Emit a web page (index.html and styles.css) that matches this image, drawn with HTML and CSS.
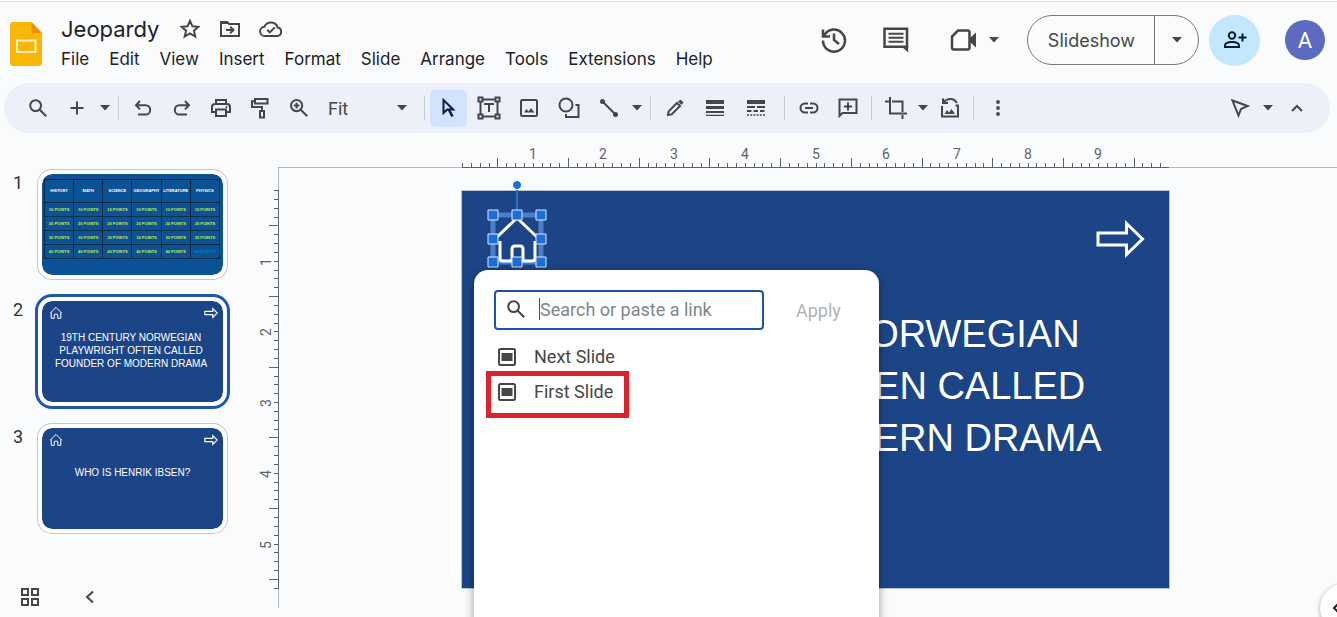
FILE: index.html
```html
<!DOCTYPE html>
<html lang="en">
<head>
<meta charset="utf-8">
<title>Jeopardy</title>
<link rel="stylesheet" href="styles.css">
</head>
<body>
<svg class="sprite" aria-hidden="true">
  <symbol id="caret" viewBox="0 0 10 6"><path d="M0 0h10L5 5.5z" fill="currentColor"/></symbol>
  <symbol id="search" viewBox="0 0 20 20"><circle cx="7.6" cy="7.6" r="5.4"/><path d="M11.8 11.8l6.4 6.4"/></symbol>
  <symbol id="slide-icon" viewBox="0 0 18 18"><rect x="1" y="1" width="16" height="16" rx="1.5"/><path d="M3.5 5h11v8h-11z" fill="currentColor" stroke="none"/></symbol>
  <symbol id="home" viewBox="0 0 14 14"><path d="M1.2 7.2L7 1.4l5.8 5.8M2.2 6.4v5.9h3V9q0-.8.8-.8h2q.8 0 .8.8v3.3h3V6.4"/></symbol>
  <symbol id="arrow" viewBox="0 0 50 40"><path d="M3 14h28.500V4.500L47.500 20 31.500 35.500V26H3z"/></symbol>
</svg>

<header class="header">
  <svg class="logo" viewBox="0 0 32 44" aria-hidden="true">
    <path d="M3 0h18.500L32 11v30a3 3 0 0 1-3 3H3a3 3 0 0 1-3-3V3a3 3 0 0 1 3-3z" fill="#fbb705"/>
    <path d="M21.500 0L32 11H23a1.500 1.500 0 0 1-1.500-1.500z" fill="#ee8f00"/>
    <path d="M7 18.500h18.500v11.500H7z" fill="none" stroke="#fff3c4" stroke-width="2"/>
  </svg>
  <div class="doc">
    <div class="doc-row">
      <h1 class="title">Jeopardy</h1>
      <button class="icon-btn" aria-label="Star"><svg width="20" height="20" viewBox="0 0 20 20"><path d="M10 1.800l2.400 5.500 6 .5-4.500 3.900 1.400 5.800L10 14.400l-5.300 3.100 1.400-5.800-4.500-3.900 6-.5z"/></svg></button>
      <button class="icon-btn" aria-label="Move"><svg width="22" height="18" viewBox="0 0 22 18"><path d="M2 16V2h6l2 2h10v12z"/><path d="M1 1h7.500l2 3H1z" fill="currentColor" stroke="none"/><path d="M7 10h7M11.200 6.700l3.300 3.300-3.300 3.300"/></svg></button>
      <button class="icon-btn" aria-label="Saved to Drive"><svg width="24" height="18" viewBox="0 0 24 18"><path d="M6 16a4.600 4.600 0 0 1-.6-9.200A7 7 0 0 1 18.600 7.500 4.300 4.300 0 0 1 18.500 16z"/><path d="M8.200 9.800l2.600 2.600 5-5"/></svg></button>
    </div>
    <nav class="menus">
      <button>File</button><button>Edit</button><button>View</button><button>Insert</button><button>Format</button><button>Slide</button><button>Arrange</button><button>Tools</button><button>Extensions</button><button>Help</button>
    </nav>
  </div>
  <div class="actions">
    <button class="act" aria-label="Version history"><svg width="28" height="28" viewBox="0 0 28 28" class="bold"><path d="M3.800 10.500A11 11 0 1 1 3 14.500M3 3.500v7h7M14 7.500V14l5 4"/></svg></button>
    <button class="act" aria-label="Comments"><svg width="28" height="28" viewBox="0 0 28 28" class="bold"><path d="M2.500 2.800h22.500v18H2.500z"/><path d="M19 20h7.200v6.500z" fill="currentColor" stroke="none"/><path d="M6.500 7.800h15M6.500 11.800h15M6.500 15.800h15" stroke-width="2"/></svg></button>
    <button class="act meet" aria-label="Join a call"><svg width="28" height="24" viewBox="0 0 28 24" class="bold"><path d="M8 2.500h9.500q2 0 2 2v15q0 2-2 2H4q-2 0-2-2V8.500z"/><path d="M20 10l6-5.500v15L20 14z" fill="currentColor" stroke="none"/></svg></button>
    <button class="caret" aria-label="Call options"><svg><use href="#caret"/></svg></button>
    <div class="slideshow"><button class="show-main">Slideshow</button><button class="show-more" aria-label="Slideshow options"><svg><use href="#caret"/></svg></button></div>
    <button class="share" aria-label="Share"><svg width="24" height="20" viewBox="0 0 24 20"><circle cx="9" cy="5.500" r="3.200"/><path d="M2 17v-1.500q0-3.500 7-3.500t7 3.500V17zM19.500 3.500v8M15.500 7.500h8"/></svg></button>
    <button class="avatar">A</button>
  </div>
</header>

<div class="toolbar" role="toolbar">
  <button class="tool" aria-label="Search the menus"><svg width="20" height="20"><use href="#search"/></svg></button>
  <button class="tool" aria-label="New slide"><svg width="14" height="14" viewBox="0 0 14 14"><path d="M7 .5v13M.5 7h13"/></svg></button>
  <button class="caret" aria-label="Layouts"><svg><use href="#caret"/></svg></button>
  <span class="sep"></span>
  <button class="tool" aria-label="Undo"><svg width="18" height="18" viewBox="0 0 18 18"><path d="M6 2L2 6.200l4 4.200M2.500 6.200h9a4.700 4.700 0 0 1 0 9.400H4"/></svg></button>
  <button class="tool" aria-label="Redo"><svg width="18" height="18" viewBox="0 0 18 18"><path d="M12 2l4 4.200-4 4.200M15.500 6.200h-9a4.700 4.700 0 0 0 0 9.400H14"/></svg></button>
  <button class="tool" aria-label="Print"><svg width="22" height="20" viewBox="0 0 22 20"><path d="M6 6V2h10v4M5.500 14H2V9q0-3 3-3h12q3 0 3 3v5h-3.500M6 11.500h10V18H6z"/><circle cx="16.500" cy="9" r="1" fill="currentColor" stroke="none"/></svg></button>
  <button class="tool" aria-label="Paint format"><svg width="20" height="22" viewBox="0 0 20 22"><path d="M5 2h12.500v4.500H5zM5 4.200H2V10h10v3.500M10 14h4v6.500h-4z"/></svg></button>
  <button class="tool" aria-label="Zoom"><svg width="20" height="20" viewBox="0 0 20 20"><circle cx="7.600" cy="7.600" r="5.600"/><path d="M11.800 11.800l6.400 6.400M7.600 4.800v5.600M4.800 7.600h5.600"/></svg></button>
  <label class="zoom"><select aria-label="Zoom level"><option>Fit</option></select><svg><use href="#caret"/></svg></label>
  <span class="sep"></span>
  <button class="tool active" aria-label="Select"><svg width="16" height="20" viewBox="0 0 16 20"><path d="M2.500 2v13l3.700-3.500h6z"/><path d="M7.500 11l4 7.500" stroke-width="2.500"/></svg></button>
  <button class="tool wide" aria-label="Text box"><svg width="24" height="24" viewBox="0 0 24 24"><path d="M5 3.500h14M5 20.500h14M3.500 5v14M20.500 5v14M8 9V8h8v1M12 8v8"/><g class="knob"><path d="M1.500 1.500h4v4h-4zM18.500 1.500h4v4h-4zM1.500 18.500h4v4h-4zM18.500 18.500h4v4h-4z"/></g></svg></button>
  <button class="tool" aria-label="Image"><svg width="18" height="18" viewBox="0 0 18 18"><rect x="1" y="1" width="16" height="16" rx="1.500"/><path d="M4 13.500l2.500-3.500 2 2.500 2.500-3.500 3.500 4.500z" fill="currentColor" stroke="none"/></svg></button>
  <button class="tool wide" aria-label="Shape"><svg width="22" height="22" viewBox="0 0 22 22"><circle cx="8" cy="8" r="6.500"/><path d="M17.500 8H20.500v12H8v-3"/></svg></button>
  <button class="tool" aria-label="Line"><svg width="20" height="20" viewBox="0 0 20 20"><path d="M3 3l14 14"/><g fill="currentColor" stroke="none"><circle cx="3.500" cy="3.500" r="2.500"/><circle cx="16.500" cy="16.500" r="2.500"/></g></svg></button>
  <button class="caret" aria-label="Line types"><svg><use href="#caret"/></svg></button>
  <span class="sep"></span>
  <button class="tool" aria-label="Border colour"><svg width="18" height="18" viewBox="0 0 18 18"><path d="M2 16l.6-3.600L11 4l3 3-8.400 8.400z"/><path d="M12 2.500L13.800 1q.6-.5 1.200 0l2 2q.5.6 0 1.200L15.500 6z" fill="currentColor" stroke="none"/></svg></button>
  <button class="tool wide" aria-label="Border weight"><svg width="18" height="16" viewBox="0 0 18 16"><path d="M0 0h18v4H0zM0 6h18v3H0zM0 11h18v2H0zM0 14.800h18V16H0z" fill="currentColor" stroke="none"/></svg></button>
  <button class="tool wide" aria-label="Border dash"><svg width="18" height="16" viewBox="0 0 18 16"><path d="M0 0h18v4H0z" fill="currentColor" stroke="none"/><path d="M0 7h18" stroke-dasharray="8 2"/><path d="M0 11h18" stroke-dasharray="4.500 2"/><path d="M0 15h18" stroke-dasharray="2 1.200" stroke-width="1.500"/></svg></button>
  <span class="sep after-dash"></span>
  <button class="tool" aria-label="Insert link"><svg width="20" height="12" viewBox="0 0 20 12"><path d="M9 1.500H6a4.500 4.500 0 0 0 0 9h3M11 1.500h3a4.500 4.500 0 0 1 0 9h-3M6 6h8"/></svg></button>
  <button class="tool" aria-label="Add comment"><svg width="20" height="20" viewBox="0 0 20 20"><path d="M1.500 18V1.500h17V15h-14zM10 4.500v8M6 8.500h8"/></svg></button>
  <span class="sep"></span>
  <button class="tool" aria-label="Crop"><svg width="24" height="22" viewBox="0 0 24 22"><path d="M6 0v16.500h17M1 4.500h4M8 4.500h10.500V15M18.500 18v4"/></svg></button>
  <button class="caret tight" aria-label="Mask image"><svg><use href="#caret"/></svg></button>
  <button class="tool" aria-label="Reset image"><svg width="20" height="22" viewBox="0 0 20 22"><path d="M2 9v10.500h16V8.500h-2.500M3 1.500V6h5M3.500 5.500Q6 2 10.500 2q4 0 6.500 4"/><path d="M4.500 17l2.500-4 2.200 2.500 2.300-3.500 3.500 5z" fill="currentColor" stroke="none"/></svg></button>
  <span class="sep"></span>
  <button class="tool" aria-label="More"><svg width="4" height="16" viewBox="0 0 4 16"><g fill="currentColor" stroke="none"><circle cx="2" cy="2" r="1.900"/><circle cx="2" cy="8" r="1.900"/><circle cx="2" cy="14" r="1.900"/></g></svg></button>
  <button class="tool push" aria-label="Editing mode"><svg width="20" height="20" viewBox="0 0 20 20"><path d="M2.500 2.500l15 5.500-6.500 3-2.500 6.500z"/></svg></button>
  <button class="caret" aria-label="Mode options"><svg><use href="#caret"/></svg></button>
  <button class="tool" aria-label="Hide the menus"><svg width="12" height="8" viewBox="0 0 12 8"><path d="M1 7l5-5 5 5"/></svg></button>
</div>

<main class="workspace">
  <aside class="filmstrip">
    <ol class="thumbs">
      <li><span class="num">1</span>
        <div class="thumb board">
          <table>
            <tr><th>HISTORY</th><th>MATH</th><th>SCIENCE</th><th>GEOGRAPHY</th><th>LITERATURE</th><th>PHYSICS</th></tr>
            <tr><td>10 POINTS</td><td>10 POINTS</td><td>10 POINTS</td><td>10 POINTS</td><td>10 POINTS</td><td>10 POINTS</td></tr>
            <tr><td>20 POINTS</td><td>20 POINTS</td><td>20 POINTS</td><td>20 POINTS</td><td>20 POINTS</td><td>20 POINTS</td></tr>
            <tr><td>30 POINTS</td><td>30 POINTS</td><td>30 POINTS</td><td>30 POINTS</td><td>30 POINTS</td><td>30 POINTS</td></tr>
            <tr><td>40 POINTS</td><td>40 POINTS</td><td>40 POINTS</td><td>40 POINTS</td><td>40 POINTS</td><td class="visited">40 POINTS</td></tr>
          </table>
        </div>
      </li>
      <li><span class="num">2</span>
        <div class="thumb selected">
          <div class="thumb-icons"><svg width="14" height="14"><use href="#home"/></svg><svg width="14" height="12" class="mini-arrow"><use href="#arrow"/></svg></div>
          <p>19TH CENTURY NORWEGIAN<br>PLAYWRIGHT OFTEN CALLED<br>FOUNDER OF MODERN DRAMA</p>
        </div>
      </li>
      <li><span class="num">3</span>
        <div class="thumb">
          <div class="thumb-icons"><svg width="14" height="14"><use href="#home"/></svg><svg width="14" height="12" class="mini-arrow"><use href="#arrow"/></svg></div>
          <p class="single">WHO IS HENRIK IBSEN?</p>
        </div>
      </li>
    </ol>
    <div class="film-foot">
      <button class="icon-btn" aria-label="Grid view"><svg width="20" height="20" viewBox="0 0 20 20"><path d="M2 2h6v6H2zM12 2h6v6h-6zM2 12h6v6H2zM12 12h6v6h-6z"/></svg></button>
      <button class="icon-btn" aria-label="Hide filmstrip"><svg width="10" height="14" viewBox="0 0 10 14"><path d="M8 1.500L2 7l6 5.500"/></svg></button>
    </div>
  </aside>

  <section class="editor">
    <svg class="ruler-x" id="ruler-x" aria-hidden="true"></svg>
    <svg class="ruler-y" id="ruler-y" aria-hidden="true"></svg>
    <div class="stage">
      <div class="slide">
        <svg class="next" width="50" height="40"><use href="#arrow"/></svg>
        <p class="slide-text">19TH CENTURY NORWEGIAN<br>PLAYWRIGHT OFTEN CALLED<br>FOUNDER OF MODERN DRAMA</p>
        <svg class="selection" width="60" height="90" viewBox="0 0 60 90" aria-hidden="true">
          <path d="M30 6v30" stroke="#2f6fc9" stroke-width="2"/>
          <rect x="6" y="36" width="48" height="47" fill="none" stroke="#4c7fcb" stroke-width="5"/>
          <path d="M10 58L30 39l20 19M13 62v17q0 3 3 3h9V70q0-3 3-3h5q3 0 3 3v12h9q3 0 3-3V62" fill="none" stroke="#fff" stroke-width="3"/>
          <circle cx="30" cy="6" r="4.500" fill="#1b6fd6"/>
          <g fill="#1b6fd6" stroke="#d9e9ff"><path d="M1 31h10v10H1zM25 31h10v10H25zM49 31h10v10H49zM1 55h10v10H1zM49 55h10v10H49zM1 78h10v10H1zM25 78h10v10H25zM49 78h10v10H49z"/></g>
        </svg>
        <form class="popover">
          <div class="link-row">
            <label class="field"><svg width="20" height="20"><use href="#search"/></svg><span class="cursor"></span><input type="text" placeholder="Search or paste a link" aria-label="Search or paste a link"></label>
            <button type="button" class="apply" disabled>Apply</button>
          </div>
          <ul class="links">
            <li><button type="button"><svg width="18" height="18"><use href="#slide-icon"/></svg>Next Slide</button></li>
            <li class="marked"><button type="button"><svg width="18" height="18"><use href="#slide-icon"/></svg>First Slide</button></li>
          </ul>
        </form>
      </div>
    </div>
  </section>
  <button class="side-toggle" aria-label="Show side panel"><svg width="12" height="12" viewBox="0 0 12 12"><path d="M7 1L2 6l5 5"/></svg></button>
</main>
<script src="rulers.js"></script>
</body>
</html>
```
FILE: styles.css
```css
* { box-sizing: border-box; }
body {
  margin: 0;
  height: 100vh;
  display: flex;
  flex-direction: column;
  overflow: hidden;
  background: #fafbfd;
  color: #202124;
  font-family: Roboto, "Liberation Sans", sans-serif;
}
button, select, input { font: inherit; color: inherit; border: 0; background: none; padding: 0; margin: 0; }
h1, p, ol, ul { margin: 0; padding: 0; list-style: none; font-weight: 400; }
svg { display: block; fill: none; stroke: currentColor; stroke-width: 2; flex: none; }
.bold { stroke-width: 2.5; }
.sprite { position: absolute; width: 0; height: 0; }

.header {
  display: flex;
  height: 83px;
  flex: none;
  padding: 0 12px 0 10px;
  background: linear-gradient(#fff 1px, #dfe1e6 1px, #dfe1e6 2px, transparent 2px);
}
.logo { width: 32px; height: 44px; margin-top: 22px; stroke: none; }
.doc { padding: 14px 0 0 19px; }
.doc-row { display: flex; align-items: center; height: 30px; gap: 18px; }
.title { font: 22px/28px Inter, sans-serif; margin-right: 2px; }
.icon-btn { display: grid; place-items: center; min-width: 22px; color: #444746; }
.menus { display: flex; gap: 20px; font: 17px/30px Inter, sans-serif; }
.actions { display: flex; align-items: center; margin: 14px 0 17px auto; height: 52px; color: #444746; }
.act { width: 42px; height: 42px; margin-right: 20px; display: grid; place-items: center; }
.act.meet { margin: 0 0 0 6px; }
.caret { width: 18px; height: 34px; display: grid; place-items: center; color: #444746; flex: none; }
.caret.tight { width: 15px; }
.caret svg, .show-more svg, .zoom svg { width: 10px; height: 6px; stroke: none; }
.slideshow { display: flex; height: 50px; border: 1px solid #747775; border-radius: 25px; margin: 0 10px 0 24px; }
.show-main { padding: 0 19px 0 20px; font: 18px Inter, sans-serif; border-right: 1px solid #747775; }
.show-more { width: 43px; display: grid; place-items: center; }
.share { width: 51px; height: 51px; border-radius: 50%; background: #c2e7ff; color: #001d35; display: grid; place-items: center; }
.avatar { width: 40px; height: 40px; border-radius: 50%; margin-left: 25px; background: #5c6bc0; color: #fff; font-size: 22px; }

.toolbar {
  display: flex;
  align-items: center;
  flex: none;
  height: 50px;
  margin: 0 7px 0 4px;
  padding: 0 14px;
  border-radius: 25px;
  background: #ecf0f9;
  color: #444746;
}
.tool { width: 39px; height: 37px; display: grid; place-items: center; flex: none; }
.tool.wide { width: 41px; }
.tool.active { width: 37px; margin: 0 1px; border-radius: 5px; background: #d3e3fd; color: #041e49; }
.tool.push { margin-left: auto; }
.knob { fill: #ecf0f9; }
.sep { width: 1px; height: 24px; margin: 0 4px; background: #c7cad1; flex: none; }
.after-dash { margin-left: 8px; }
.zoom { display: flex; align-items: center; width: 102px; padding: 0 13px 0 10px; font-size: 18px; flex: none; }
.zoom select { flex: 1; appearance: none; outline: 0; }

.workspace { position: relative; flex: 1; display: flex; min-height: 0; overflow: hidden; }
.filmstrip { width: 250px; flex: none; display: flex; flex-direction: column; justify-content: space-between; padding: 37px 0 10px 13px; }
.thumbs { display: grid; gap: 18px; }
.thumbs li { display: flex; }
.num { width: 25px; font-size: 18px; line-height: 26px; color: #333; }
.thumb {
  width: 189px;
  height: 109px;
  border: 4px solid #fff;
  border-radius: 14px;
  background: #1c4587;
  background-clip: padding-box;
  box-shadow: 0 0 0 1px #c4c7c5;
  color: #fff;
  font: 10px/13px "Liberation Sans", sans-serif;
  text-align: center;
  white-space: nowrap;
}
.thumb.selected { box-shadow: 0 0 0 3px #1f55ab; }
.thumb p { padding-top: 11px; margin-right: 3px; }
.thumb p.single { padding-top: 19px; margin-right: 0; }
.thumb-icons { display: flex; justify-content: space-between; align-items: center; padding: 5px 5px 0 7px; }
.thumb-icons svg { stroke-width: 1; }
.thumb-icons .mini-arrow { stroke-width: 4; }
.board { background-color: #0b5394; padding: 5px 3px 0 2px; }
.board table { width: 100%; table-layout: fixed; border-collapse: collapse; font: bold 4px/6px "Liberation Sans", sans-serif; }
.board th, .board td { height: 14px; padding: 0; border: 1px solid #082848; color: #c3e94d; }
.board th { height: 23px; color: #fff; }
.board .visited { color: #1276b5; }
.film-foot { display: flex; gap: 38px; padding-left: 6px; }

.editor { flex: 1; min-width: 0; display: grid; grid-template: 36px 1fr / 30px 1fr; padding-right: 8px; overflow: hidden; }
.ruler-x { grid-area: 1 / 2; width: 100%; height: 36px; }
.ruler-y { grid-area: 2 / 1; width: 30px; height: 440px; }
.ruler-x, .ruler-y { stroke-width: 1; color: #5f6368; font-size: 14px; shape-rendering: crispEdges; overflow: visible; }
.stage { grid-area: 2 / 2; padding: 22px 0 0 182px; }
.slide { position: relative; width: 707px; height: 397px; background: #1c4587; box-shadow: 0 0 0 1px #b8c2d2; color: #fff; }
.next { position: absolute; top: 28px; right: 24px; stroke-width: 3; }
.slide-text { padding-top: 117px; margin-right: 6px; text-align: center; font: 38px/52px "Liberation Sans", sans-serif; white-space: nowrap; }
.selection { position: absolute; left: 25px; top: -12px; stroke-width: 1; }

.popover {
  position: absolute;
  left: 12px;
  top: 79px;
  width: 405px;
  height: 380px;
  padding: 20px;
  border-radius: 14px;
  background: #fff;
  box-shadow: 0 2px 10px rgba(0, 0, 0, .4);
  color: #444746;
  font-size: 18px;
}
.link-row { display: flex; align-items: center; gap: 32px; }
.field { display: flex; align-items: center; width: 270px; height: 40px; border: 2px solid #1b55a5; border-radius: 4px; padding: 0 0 2px 10px; }
.cursor { width: 1px; height: 22px; margin-left: 13px; background: #1b55a5; }
.field input { flex: 1; min-width: 0; outline: 0; }
.field input::placeholder { color: #80868b; opacity: 1; }
.apply { color: #b0b2b5; }
.links { padding-top: 9px; }
.links li { position: relative; height: 35px; }
.links button { display: flex; align-items: center; gap: 18px; height: 35px; padding-left: 4px; }
.marked::after { content: ""; position: absolute; box-sizing: border-box; left: -8px; top: -3px; width: 143px; height: 47px; border: 5px solid #db222d; }
.side-toggle {
  position: absolute;
  right: -31px;
  bottom: -15px;
  width: 48px;
  height: 48px;
  border-radius: 50%;
  background: #fff;
  box-shadow: 0 1px 4px rgba(0, 0, 0, .35);
  padding-left: 12px;
}
```
FILE: rulers.js
```js
// Draws both rulers: a tick each eighth of an inch, a tall tick at each half, a number at each inch.
const INCH = 70.7;

function tickPath(inches, place) {
  let d = '';
  for (let k = 0; k <= inches * 8; k++) {
    d += place(Math.round(k * INCH / 8), k % 8 === 4 ? 10 : 5);
  }
  return d;
}

const x0 = 183;
const line = 34.5;
let x = `<path stroke="#b4b7bb" d="M-2 ${line}H2000"/><path d="M${x0} ${line}H${x0 + 706}` +
  tickPath(9.875, (p, len) => `M${x0 + p - 0.5} ${line}v-${len}`) + '"/>';
for (let n = 1; n <= 9; n++) {
  x += `<text x="${Math.round(x0 + n * INCH) - 1}" y="26" text-anchor="middle" fill="currentColor" stroke="none">${n}</text>`;
}
document.getElementById('ruler-x').innerHTML = x;

const y0 = 21;
let y = `<path stroke="#b4b7bb" d="M28.5 -2V439"/><path d="M28.5 ${y0}V${y0 + 398}` +
  tickPath(5.625, (p, len) => `M28.5 ${y0 + p + 0.5}h-${len}`) + '"/>';
for (let n = 1; n <= 5; n++) {
  y += `<text transform="translate(21 ${Math.round(y0 + n * INCH) + 1}) rotate(-90)" text-anchor="middle" fill="currentColor" stroke="none">${n}</text>`;
}
document.getElementById('ruler-y').innerHTML = y;
```
